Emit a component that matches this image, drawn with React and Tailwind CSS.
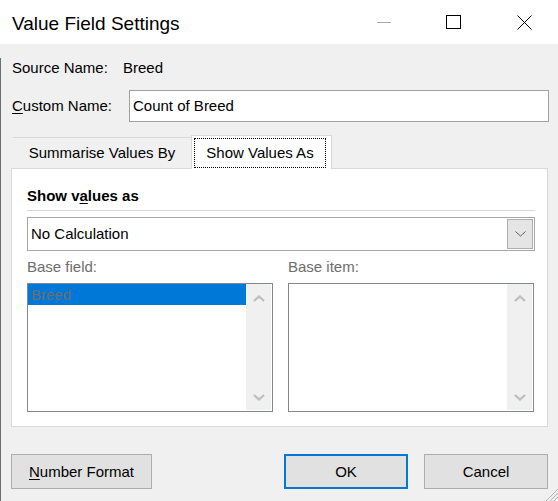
function UpChevron() {
  return (
    <svg width="12" height="7" viewBox="0 0 12 7">
      <polyline points="1,6 6,1.5 11,6" fill="none" stroke="#bdbdbd" strokeWidth="2.2" />
    </svg>
  )
}

function DownChevron() {
  return (
    <svg width="12" height="7" viewBox="0 0 12 7">
      <polyline points="1,1 6,5.5 11,1" fill="none" stroke="#bdbdbd" strokeWidth="2.2" />
    </svg>
  )
}

function ListBox({ items = [] }) {
  return (
    <div className="flex h-[129px] border border-[#828790] bg-white pr-px pb-px">
      <div className="flex-1">
        {items.map(it => (
          <div key={it} className="h-[21px] bg-[#0078d7] pl-[3px] leading-[21px] text-[#6d6d6d]">{it}</div>
        ))}
      </div>
      <div className="flex w-[25px] flex-col items-center justify-between bg-[#f0f0f0] pt-[11px] pb-[9px]">
        <UpChevron />
        <DownChevron />
      </div>
    </div>
  )
}

function TitleBar() {
  return (
    <div className="flex h-[44px] items-center bg-white pl-[12px]">
      <span className="pt-[3px] text-[19px] leading-[24px]">Value Field Settings</span>
      <div className="ml-auto flex items-center pr-[26px]">
        <div className="h-px w-[14px] bg-[#a9a9a9]" />
        <div className="ml-[55px] h-[14px] w-[15px] border border-black" />
        <svg className="ml-[56px]" width="15" height="15" viewBox="0 0 15 15">
          <line x1="0.5" y1="0.5" x2="14.5" y2="14.5" stroke="black" strokeWidth="1" />
          <line x1="14.5" y1="0.5" x2="0.5" y2="14.5" stroke="black" strokeWidth="1" />
        </svg>
      </div>
    </div>
  )
}

export default function App() {
  return (
    <div className="relative h-[501px] w-[558px] overflow-hidden bg-[#f0f0f0] font-['Liberation_Sans',Arial,sans-serif] text-[15px] leading-[20px] text-black">
      <TitleBar />

      <div className="h-[457px] border-l border-[#6e6e6e] pl-[10px] pr-[11px]">
        <div className="mt-[14px] flex h-[20px]">
          <div className="w-[112px] pl-px">Source Name:</div>
          <div>Breed</div>
        </div>

        <div className="mt-[12px] flex h-[32px] items-center">
          <div className="w-[118px] shrink-0 pl-px"><span className="underline underline-offset-2">C</span>ustom Name:</div>
          <div className="flex h-[32px] w-[420px] shrink-0 items-center border border-[#a0a0a0] bg-white pl-[3px]">Count of Breed</div>
        </div>

        {/* tabs */}
        <div className="mt-[13px] -mb-px flex h-[34px] items-end pl-[2px]">
          <div className="flex h-[32px] w-[178px] items-center justify-center border-t border-[#d9d9d9] pb-[1px]">Summarise Values By</div>
          <div className="relative z-10 h-[34px] w-[141px] border-x border-t border-[#d9d9d9] bg-white pt-[2px] pl-[2px] pr-[5px]">
            <div className="flex h-[30px] items-center justify-center border border-dotted border-black">Show Values As</div>
          </div>
        </div>

        <div className="h-[259px] w-[537px] border border-[#d9d9d9] bg-white pt-[17px] pl-[15px] pr-[12px]">
          <div className="font-bold">Show v<span className="underline underline-offset-2">a</span>lues as</div>
          <div className="mt-[4px] h-px bg-[#d9d9d9]" />
          <div className="mt-[6px] flex h-[34px] items-center border border-[#a6a6a6] bg-white pl-[3px] pr-px">
            <span className="flex-1">No Calculation</span>
            <div className="flex h-[30px] w-[26px] items-center justify-center border border-[#adadad] bg-[#e5e5e5]">
              <svg width="11" height="6" viewBox="0 0 11 6">
                <polyline points="0.5,0.5 5.5,5 10.5,0.5" fill="none" stroke="#606060" strokeWidth="1" />
              </svg>
            </div>
          </div>
          <div className="mt-[6px] grid grid-cols-[246px_246px] gap-x-[15px] text-[#6d6d6d]">
            <div>Base field:</div>
            <div>Base item:</div>
          </div>
          <div className="mt-[6px] grid grid-cols-[246px_246px] gap-x-[15px]">
            <ListBox items={['Breed']} />
            <ListBox />
          </div>
        </div>

        <div className="mt-[27px] flex">
          <button className="h-[35px] w-[141px] shrink-0 border border-[#adadad] bg-[#e1e1e1]">
            <span className="underline underline-offset-2">N</span>umber Format
          </button>
          <button className="ml-[132px] h-[35px] w-[124px] shrink-0 border-2 border-[#0078d7] bg-[#e1e1e1]">OK</button>
          <button className="ml-[16px] h-[35px] w-[124px] shrink-0 border border-[#adadad] bg-[#e1e1e1]">Cancel</button>
        </div>
      </div>

      <svg className="absolute right-0 bottom-0" width="13" height="13" viewBox="0 0 13 13">
        <line x1="13" y1="1" x2="1" y2="13" stroke="#b5b5b5" strokeWidth="1" />
        <line x1="13" y1="5" x2="5" y2="13" stroke="#b5b5b5" strokeWidth="1" />
        <line x1="13" y1="9" x2="9" y2="13" stroke="#b5b5b5" strokeWidth="1" />
      </svg>
    </div>
  )
}
